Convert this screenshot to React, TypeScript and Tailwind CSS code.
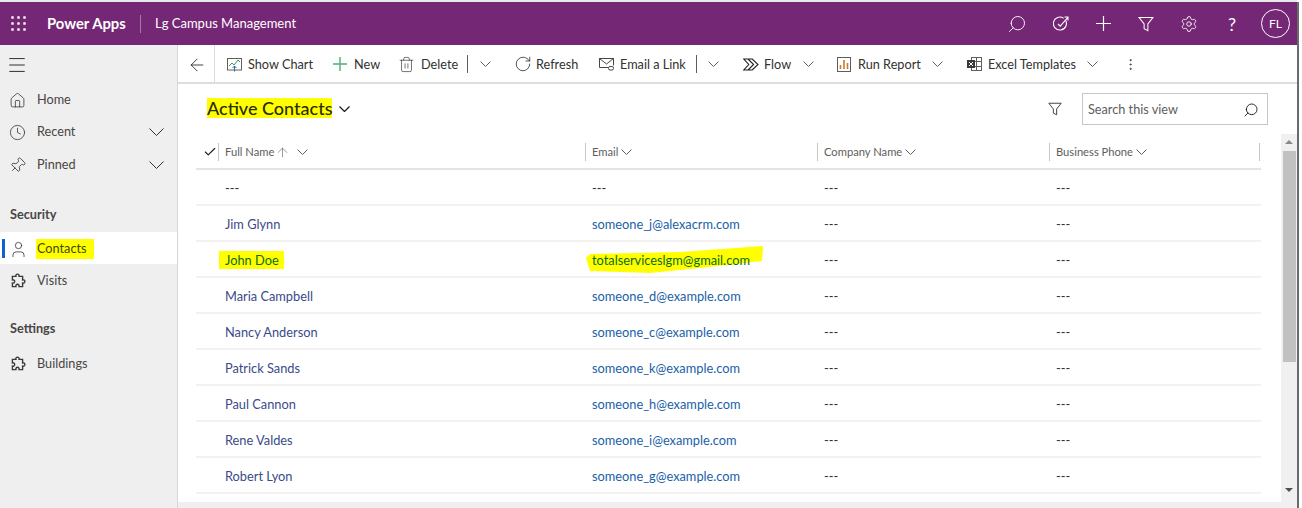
import { ArrowLeft, Home, Clock, Pin, User, Search, Settings, Menu, ArrowUp, Check, EllipsisVertical, RotateCw, Trash2 } from 'lucide-react';

const FONT = 'font-["Lato","Open_Sans",sans-serif]';

function Grid9() {
  return (
    <svg width="15" height="15" viewBox="0 0 15 15" fill="#fff">
      {[1.5, 7.5, 13.5].map((y) =>
        [1.5, 7.5, 13.5].map((x) => <rect key={`${x}-${y}`} x={x - 1.2} y={y - 1.2} width="2.4" height="2.4" />)
      )}
    </svg>
  );
}

function Chev({ w = 11, color = '#605e5c', sw = 1 }: { w?: number; color?: string; sw?: number }) {
  const h = w / 2 + 1;
  return (
    <svg width={w} height={h} viewBox={`0 0 ${w} ${h}`} fill="none" stroke={color} strokeWidth={sw} className="shrink-0">
      <path d={`M.5 .5 ${w / 2} ${w / 2} ${w - 0.5} .5`} />
    </svg>
  );
}

function Funnel({ size = 17, color = '#fff' }: { size?: number; color?: string }) {
  return (
    <svg width={size} height={size} viewBox="0 0 17 17" fill="none" stroke={color} strokeWidth="1.1">
      <path d="M1 1.5h15l-5.5 7v7l-4-2v-5z" />
    </svg>
  );
}

function Cross({ size, color, sw }: { size: number; color: string; sw: number }) {
  return (
    <svg width={size} height={size} viewBox={`0 0 ${size} ${size}`} stroke={color} strokeWidth={sw}>
      <path d={`M0 ${size / 2}H${size}M${size / 2} 0V${size}`} />
    </svg>
  );
}

function Puzzle() {
  return (
    <svg width="17" height="17" viewBox="0 0 16 16" fill="none" stroke="#3b3a39" strokeWidth="1.3">
      <path d="M3.2 3.2h3.3a1.6 1.6 0 1 1 3 0h3.3v3.3a1.6 1.6 0 1 1 0 3v3.3H9.5a1.6 1.6 0 1 0-3 0H3.2V9.5a1.6 1.6 0 1 0 0-3z" />
    </svg>
  );
}

function ChartIcon() {
  return (
    <svg width="15" height="15" viewBox="0 0 15 15" fill="none">
      <rect x="0.5" y="1.5" width="14" height="11.5" stroke="#605e5c" />
      <path d="M2 9l3-3 2 2 4-5 2 2" stroke="#2f9e5b" />
      <path d="M7.5 14.5V9M5.5 11l2-2 2 2" stroke="#1f6fb5" />
    </svg>
  );
}

function MailIcon() {
  return (
    <svg width="15" height="13" viewBox="0 0 15 13" fill="none" stroke="#484644">
      <path d="M9 9.5H.5v-9h14v7M.5 .5 7.5 6l7-5.5" />
      <rect x="9.5" y="8.5" width="5" height="3.5" rx="1.5" />
    </svg>
  );
}

function FlowIcon() {
  return (
    <svg width="16" height="13" viewBox="0 0 16 13" fill="none" stroke="#201f1e" strokeWidth="1.1">
      <path d="M.8 1h8.4l5.8 5.5-5.8 5.5H.8l5-5.5zM5 1l5.6 5.5L5 12" />
    </svg>
  );
}

function ReportIcon() {
  return (
    <svg width="14" height="15" viewBox="0 0 14 15" fill="none">
      <rect x="0.5" y="0.5" width="13" height="14" stroke="#605e5c" />
      <path d="M3.5 12V8M7 12V3M10.5 12V6" stroke="#c8792b" strokeWidth="1.6" />
    </svg>
  );
}

function ExcelIcon() {
  return (
    <svg width="15" height="14" viewBox="0 0 15 14" fill="none">
      <rect x="4.5" y="0.5" width="10" height="13" stroke="#605e5c" />
      <path d="M4.5 4.5h10M4.5 9.5h10M9.5.5v13" stroke="#605e5c" />
      <rect x="0" y="3" width="8" height="8" fill="#3b3a39" />
      <path d="M2 5l4 4M6 5 2 9" stroke="#fff" />
    </svg>
  );
}

function TargetCheck() {
  return (
    <svg width="16" height="16" viewBox="0 0 16 16" fill="none" stroke="#fff" strokeWidth="1.1">
      <path d="M12.7 4.6A6.5 6.5 0 1 1 10.6 2.2" />
      <path d="M5 8l2.2 2.2 7.5-8.5M11.5 1h3.5v3.5" />
    </svg>
  );
}

function Tool({ icon, label, className }: { icon: React.ReactNode; label: string; className: string }) {
  return (
    <div className={`flex items-center shrink-0 text-[#323130] ${className}`}>
      <span className="w-[21px] flex justify-start">{icon}</span>
      <span className="whitespace-nowrap">{label}</span>
    </div>
  );
}

function NavItem({ icon, label, chevron, active }: { icon: React.ReactNode; label: string; chevron?: boolean; active?: boolean }) {
  return (
    <div className={`relative h-[32px] flex items-center pt-[2px] pl-[9px] pr-[13px] ${active ? 'bg-white' : ''}`}>
      {active && <div className="absolute left-[2px] top-[7px] bottom-[6px] w-[3px] bg-[#1160d8]" />}
      <span className="w-[28px] flex">{icon}</span>
      {active ? (
        <span className="bg-[#ffff00] text-[#3f4a00] pl-[1px] pr-[7px] -ml-[1px]">{label}</span>
      ) : (
        <span className="text-[#484644]">{label}</span>
      )}
      {chevron && <span className="ml-auto"><Chev w={15} color="#323130" /></span>}
    </div>
  );
}

function ColumnHead({ label, className, children }: { label: string; className: string; children?: React.ReactNode }) {
  return (
    <div className={`h-[18px] flex items-center border-l border-[#c8c6c4] pl-[6px] text-[11.2px] text-[#605e5c] shrink-0 ${className}`}>
      <span className="whitespace-nowrap">{label}</span>
      {children ?? <span className="ml-[3px] flex"><Chev w={11} /></span>}
    </div>
  );
}

const rows = [
  { name: '---', email: '---' },
  { name: 'Jim Glynn', email: 'someone_j@alexacrm.com' },
  { name: 'John Doe', email: 'totalserviceslgm@gmail.com', marked: true },
  { name: 'Maria Campbell', email: 'someone_d@example.com' },
  { name: 'Nancy Anderson', email: 'someone_c@example.com' },
  { name: 'Patrick Sands', email: 'someone_k@example.com' },
  { name: 'Paul Cannon', email: 'someone_h@example.com' },
  { name: 'Rene Valdes', email: 'someone_i@example.com' },
  { name: 'Robert Lyon', email: 'someone_g@example.com' },
];

export default function App() {
  return (
    <div className={`w-[1302px] h-[508px] overflow-hidden bg-white flex text-[12.7px] ${FONT}`}>
      <div className="w-[1297px] shrink-0 flex flex-col">
        {/* Top bar */}
        <div className="h-[45px] shrink-0 border-t-2 border-[#e8e8e8] bg-[#742774] text-white flex items-center">
          <div className="w-[47px] pl-[11px] flex"><Grid9 /></div>
          <span className="font-bold text-[14.8px] w-[93px] whitespace-nowrap">Power Apps</span>
          <div className="w-px h-[18px] bg-[#a777a7]" />
          <span className="ml-[14px] text-[13px] whitespace-nowrap">Lg Campus Management</span>
          <div className="ml-auto flex items-center">
            <Search size={20} strokeWidth={1.1} className="-scale-x-100 mr-[26px]" />
            <span className="mr-[27px] flex"><TargetCheck /></span>
            <span className="mr-[27px] flex"><Cross size={15} color="#fff" sw={1.2} /></span>
            <span className="mr-[26px] flex"><Funnel size={16} /></span>
            <Settings size={18} strokeWidth={1.2} className="mr-[30px]" />
            <span className="text-[18px] w-[10px] mr-[23px] leading-none">?</span>
            <div className="w-[29px] h-[29px] rounded-full border border-white flex items-center justify-center text-[12px] mr-[7px]">FL</div>
          </div>
        </div>

        <div className="flex flex-1 min-h-0">
          {/* Sidebar */}
          <div className="w-[178px] shrink-0 bg-[#efefef] border-r border-[#d6d6d6]">
            <div className="h-[38px] flex items-center pt-[2px] pl-[6px]">
              <Menu size={22} strokeWidth={1} className="text-[#201f1e]" />
            </div>
            <NavItem icon={<Home size={17} strokeWidth={1.1} className="text-[#323130]" />} label="Home" />
            <NavItem icon={<Clock size={17} strokeWidth={1.1} className="text-[#323130]" />} label="Recent" chevron />
            <div className="h-px" />
            <NavItem icon={<Pin size={17} strokeWidth={1.1} className="rotate-45 text-[#323130]" />} label="Pinned" chevron />
            <div className="h-[52px] pl-[10px] pb-[8px] flex items-end text-[#484644] font-bold">Security</div>
            <NavItem icon={<User size={19} strokeWidth={1} className="text-[#323130]" />} label="Contacts" active />
            <NavItem icon={<Puzzle />} label="Visits" />
            <div className="h-[51px] pl-[10px] pb-[9px] flex items-end text-[#484644] font-bold">Settings</div>
            <NavItem icon={<Puzzle />} label="Buildings" />
          </div>

          {/* Main */}
          <div className="flex-1 min-w-0 flex flex-col">
            {/* Command bar */}
            <div className="h-[39px] shrink-0 flex items-center border-b-2 border-[#dddddd]">
              <div className="w-[37px] h-full flex items-center pt-[2px] pl-[9px] border-r border-[#dddddd]">
                <ArrowLeft size={20} strokeWidth={1} className="text-[#201f1e]" />
              </div>
              <div className="flex-1 flex items-center pt-[2px]">
                <Tool className="ml-[12px] w-[106px]" icon={<ChartIcon />} label="Show Chart" />
                <Tool className="w-[67px]" icon={<Cross size={14} color="#4caf78" sw={1.4} />} label="New" />
                <Tool className="w-[67px]" icon={<Trash2 size={17} strokeWidth={1} className="text-[#3b3a39] -ml-[2px]" />} label="Delete" />
                <div className="w-px h-[18px] bg-[#605e5c]" />
                <div className="w-[47px] pl-[12px] flex"><Chev /></div>
                <Tool className="w-[84px]" icon={<RotateCw size={18} strokeWidth={1} className="text-[#201f1e] -ml-[1px]" />} label="Refresh" />
                <Tool className="w-[97px]" icon={<MailIcon />} label="Email a Link" />
                <div className="w-px h-[18px] bg-[#605e5c]" />
                <div className="w-[46px] pl-[11px] flex"><Chev /></div>
                <Tool className="w-[60px]" icon={<FlowIcon />} label="Flow" />
                <div className="w-[34px] flex"><Chev /></div>
                <Tool className="w-[95px]" icon={<ReportIcon />} label="Run Report" />
                <div className="w-[35px] flex"><Chev /></div>
                <Tool className="w-[120px]" icon={<ExcelIcon />} label="Excel Templates" />
                <div className="w-[36px] flex"><Chev /></div>
                <EllipsisVertical size={15} strokeWidth={1.2} className="text-[#323130]" />
              </div>
            </div>

            {/* View header */}
            <div className="h-[50px] shrink-0 flex items-center pl-[29px] pr-[29px]">
              <span className="bg-[#ffff00] text-[18px] font-medium text-[#2b2b00] leading-[20px] whitespace-nowrap -mt-[2px]">Active Contacts</span>
              <span className="ml-[7px] flex"><Chev w={11} color="#201f1e" sw={1.3} /></span>
              <span className="ml-auto mr-[20px] flex"><Funnel size={14} color="#323130" /></span>
              <div className="w-[186px] h-[32px] border border-[#c8c6c4] flex items-center justify-between pt-[1px] pl-[5px] pr-[8px] text-[#605e5c]">
                <span>Search this view</span>
                <Search size={16} strokeWidth={1.4} className="-scale-x-100 text-[#201f1e]" />
              </div>
            </div>

            <div className="flex flex-1 min-h-0">
              <div className="w-[1103px] shrink-0 flex flex-col">
                {/* Column headers */}
                <div className="h-[36px] shrink-0 ml-[18px] w-[1065px] flex items-center pt-[2px] border-b-2 border-[#e4e4e4]">
                  <Check size={14} strokeWidth={2} className="ml-[6px] w-[16px] text-[#201f1e] shrink-0" />
                  <ColumnHead label="Full Name" className="w-[367px]">
                    <ArrowUp size={15} strokeWidth={1} className="ml-[1px] text-[#605e5c]" />
                    <span className="ml-[7px] flex"><Chev w={11} /></span>
                  </ColumnHead>
                  <ColumnHead label="Email" className="w-[232px]" />
                  <ColumnHead label="Company Name" className="w-[232px]" />
                  <ColumnHead label="Business Phone" className="w-[211px] border-r" />
                </div>

                {/* Rows */}
                {rows.map((row) => (
                  <div key={row.name} className="h-[36px] shrink-0 ml-[18px] w-[1065px] flex items-center pt-[4px] text-[12.8px] border-b-2 border-[#f3f2f1]">
                    <div className="w-[29px] shrink-0" />
                    <div className="w-[367px] shrink-0">
                      {row.marked ? (
                        <span className="bg-[#ffff00] text-[#0b6b1c] py-[1px] pl-[6px] pr-[5px] -ml-[6px]">{row.name}</span>
                      ) : (
                        <span className={row.name === '---' ? 'text-[#323130]' : 'text-[#3b4a8a]'}>{row.name}</span>
                      )}
                    </div>
                    <div className="w-[232px] shrink-0">
                      {row.marked ? (
                        <span className="relative inline-block text-[#0b6b1c]">
                          <svg className="absolute -left-[6px] -top-[5px]" width="180" height="30" viewBox="0 0 180 30">
                            <polygon points="0,12 4,8 94,6 177,0 176,15 114,22 64,27 4,25" fill="#ffff00" />
                          </svg>
                          <span className="relative">{row.email}</span>
                        </span>
                      ) : (
                        <span className={row.email === '---' ? 'text-[#323130]' : 'text-[#1a5fa8]'}>{row.email}</span>
                      )}
                    </div>
                    <div className="w-[232px] shrink-0 text-[#323130]">---</div>
                    <div className="text-[#323130]">---</div>
                  </div>
                ))}
                <div className="flex-1" />
                <div className="h-[6px] bg-[#efefef] shrink-0" />
              </div>

              {/* Scrollbar */}
              <div className="w-[16px] shrink-0 bg-[#f0f0f0] flex flex-col items-center">
                <div className="mt-[6px] w-0 h-0 border-x-[4px] border-x-transparent border-b-[4px] border-b-[#8a8a8a]" />
                <div className="mt-[7px] w-[13px] h-[211px] bg-[#c1c1c1]" />
                <div className="mt-[126px] w-0 h-0 border-x-[4px] border-x-transparent border-t-[4px] border-t-[#505050]" />
              </div>
            </div>
          </div>
        </div>
      </div>
      <div className="w-[2px] shrink-0 mt-[2px] bg-[#6b6b6b]" />
    </div>
  );
}
